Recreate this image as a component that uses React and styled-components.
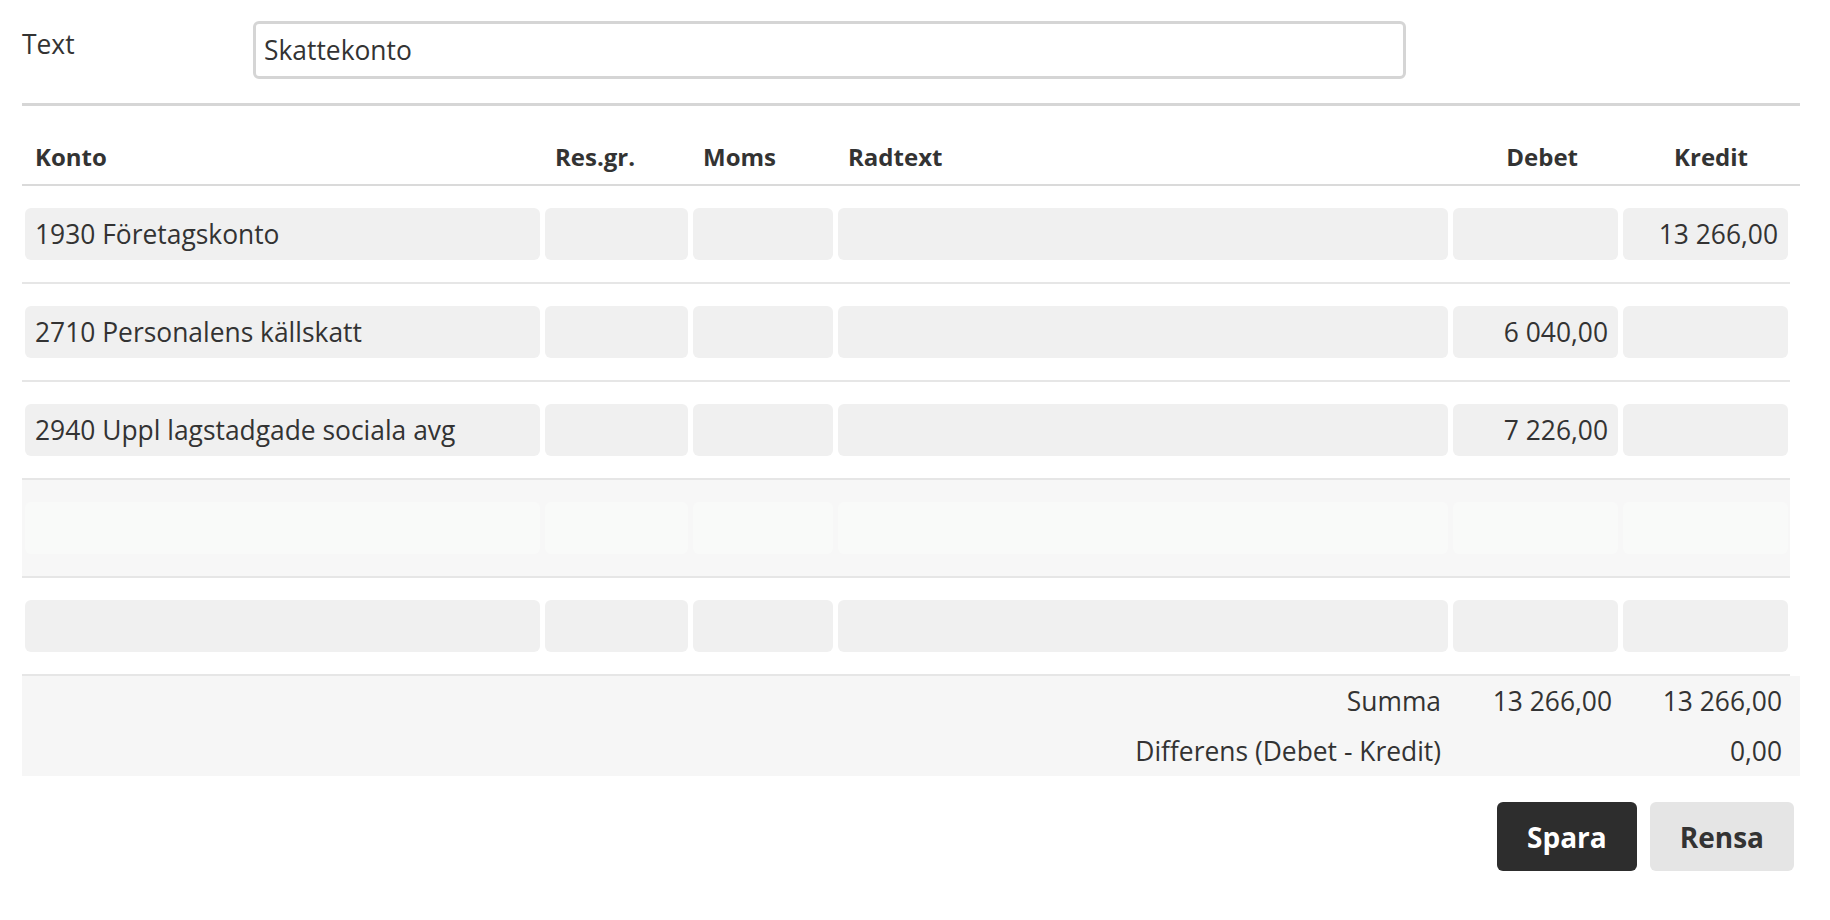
import styled, { createGlobalStyle } from "styled-components";

const COLUMNS = "515px 143px 140px 610px 165px 165px";

const rows = [
  { konto: "1930 Företagskonto", debet: "", kredit: "13 266,00" },
  { konto: "2710 Personalens källskatt", debet: "6 040,00", kredit: "" },
  { konto: "2940 Uppl lagstadgade sociala avg", debet: "7 226,00", kredit: "" },
  { konto: "", debet: "", kredit: "", muted: true },
  { konto: "", debet: "", kredit: "" },
];

const GlobalStyle = createGlobalStyle`
  body {
    margin: 0;
    background: #ffffff;
    font-family: "Open Sans", "Liberation Sans", sans-serif;
    color: #333333;
  }
`;

const App = () => {
  return (
    <>
      <GlobalStyle />
      <Page>
        <Form>
          <FieldRow>
            <FieldLabel>Text</FieldLabel>
            <TextInput defaultValue="Skattekonto" />
          </FieldRow>
          <Rule />
          <Table>
            <HeaderRow>
              <HeadCell>Konto</HeadCell>
              <HeadCell>Res.gr.</HeadCell>
              <HeadCell>Moms</HeadCell>
              <HeadCell>Radtext</HeadCell>
              <HeadCell $numeric>Debet</HeadCell>
              <HeadCell $numeric>Kredit</HeadCell>
            </HeaderRow>
            {rows.map((row, i) => (
              <Row key={i} $muted={row.muted}>
                <Cell $muted={row.muted}>{row.konto}</Cell>
                <Cell $muted={row.muted} />
                <Cell $muted={row.muted} />
                <Cell $muted={row.muted} />
                <Cell $muted={row.muted} $numeric>
                  {row.debet}
                </Cell>
                <Cell $muted={row.muted} $numeric>
                  {row.kredit}
                </Cell>
              </Row>
            ))}
          </Table>
          <Summary>
            <SumRow>
              <SumLabel>Summa</SumLabel>
              <SumValue>13 266,00</SumValue>
              <SumValue>13 266,00</SumValue>
            </SumRow>
            <SumRow>
              <SumLabel>Differens (Debet - Kredit)</SumLabel>
              <SumValue />
              <SumValue>0,00</SumValue>
            </SumRow>
          </Summary>
          <Actions>
            <Button $primary>Spara</Button>
            <Button>Rensa</Button>
          </Actions>
        </Form>
      </Page>
    </>
  );
};

const Page = styled.div`
  padding: 21px 0 0 22px;
`;

const Form = styled.div`
  width: 1778px;
`;

const FieldRow = styled.div`
  display: flex;
  align-items: flex-start;
`;

const FieldLabel = styled.label`
  width: 231px;
  font-size: 26.4px;
  line-height: 36px;
  padding-top: 5px;
`;

const TextInput = styled.input`
  box-sizing: border-box;
  width: 1153px;
  height: 58px;
  border: 3px solid #d5d5d5;
  border-radius: 6px;
  padding: 0 8px;
  font-family: inherit;
  font-size: 26.4px;
  color: #333333;
  outline: none;
`;

const Rule = styled.hr`
  margin: 24px 0 0;
  border: 0;
  border-top: 3px solid #d6d6d6;
`;

const Table = styled.div`
  display: flex;
  flex-direction: column;
`;

const HeaderRow = styled.div`
  display: grid;
  grid-template-columns: ${COLUMNS};
  column-gap: 5px;
  padding: 33px 0 9px 3px;
  border-bottom: 2px solid #dadada;
`;

const HeadCell = styled.div`
  font-size: 24px;
  font-weight: 700;
  line-height: 36px;
  padding: ${({ $numeric }) => ($numeric ? "0 40px 0 0" : "0 0 0 10px")};
  text-align: ${({ $numeric }) => ($numeric ? "right" : "left")};
`;

const Row = styled.div`
  display: grid;
  grid-template-columns: ${COLUMNS};
  column-gap: 5px;
  width: 1768px;
  box-sizing: border-box;
  padding: 22px 0 22px 3px;
  border-bottom: 2px solid #e6e6e6;
  background: ${({ $muted }) => ($muted ? "#f7f7f7" : "transparent")};
`;

const Cell = styled.div`
  height: 52px;
  box-sizing: border-box;
  display: flex;
  align-items: center;
  justify-content: ${({ $numeric }) => ($numeric ? "flex-end" : "flex-start")};
  padding: 0 10px;
  border-radius: 6px;
  background: ${({ $muted }) => ($muted ? "#f9faf9" : "#f0f0f0")};
  font-size: 26.4px;
  white-space: nowrap;
`;

const Summary = styled.div`
  background: #f6f6f6;
`;

const SumRow = styled.div`
  display: grid;
  grid-template-columns: ${COLUMNS};
  column-gap: 5px;
  padding-left: 3px;
  height: 50px;
  align-items: center;
  font-size: 26.4px;
`;

const SumLabel = styled.div`
  grid-column: span 4;
  text-align: right;
  padding-right: 7px;
`;

const SumValue = styled.div`
  text-align: right;
  padding-right: 6px;
`;

const Actions = styled.div`
  display: flex;
  justify-content: flex-end;
  gap: 13px;
  margin-top: 26px;
  padding-right: 6px;
`;

const Button = styled.button`
  height: 69px;
  padding: 0 30px;
  border: 0;
  border-radius: 6px;
  font-family: inherit;
  font-size: 28px;
  font-weight: 700;
  cursor: pointer;
  background: ${({ $primary }) => ($primary ? "#2d2d2d" : "#e5e5e5")};
  color: ${({ $primary }) => ($primary ? "#ffffff" : "#333333")};
`;

export default App;
